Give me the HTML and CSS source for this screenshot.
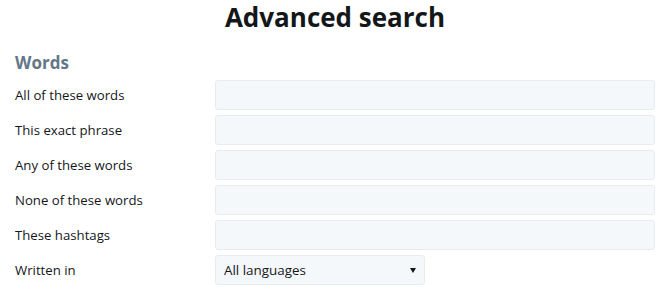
FILE: index.html
```html
<!DOCTYPE html>
<html lang="en">
<head>
  <meta charset="UTF-8">
  <title>Advanced search</title>
  <link rel="stylesheet" href="styles.css">
</head>
<body>
<div class="container">
  <h1 class="title">Advanced search</h1>
  <h2 class="section">Words</h2>
  <ul class="fields">
    <li>
      <label for="allWords">All of these words</label><input type="text" id="allWords">
    </li>
    <li>
      <label for="phrase">This exact phrase</label><input type="text" id="phrase">
    </li>
    <li>
      <label for="anyWords">Any of these words</label><input type="text" id="anyWords">
    </li>
    <li>
      <label for="noneWords">None of these words</label><input type="text" id="noneWords">
    </li>
    <li>
      <label for="hashtags">These hashtags</label><input type="text" id="hashtags">
    </li>
    <li>
      <label for="lang">Written in</label>
      <div class="select">
        <select id="lang">
          <option>All languages</option>
        </select>
      </div>
    </li>
  </ul>
</div>
</body>
</html>
```

FILE: styles.css
```css
* {
  padding: 0;
  margin: 0;
  box-sizing: border-box;
}

body {
  background-color: #fff;
  font-family: "Open Sans", "Noto Sans", sans-serif;
  color: #14171a;
}

.container {
  padding: 0 17px 0 15px;
}

.title {
  font-size: 26px;
  line-height: 34px;
  font-weight: 700;
  text-align: center;
}

.section {
  margin-top: 16px;
  height: 30px;
  font-size: 17px;
  line-height: 26px;
  font-weight: 700;
  color: #657786;
}

.fields {
  list-style: none;
}

.fields li {
  display: flex;
  align-items: center;
  height: 30px;
  margin-bottom: 5px;
}

.fields label {
  width: 200px;
  flex: none;
  font-size: 13.2px;
}

input[type=text] {
  flex: 1;
  height: 30px;
  padding: 0 10px;
  border: 1px solid #e6ecf0;
  border-radius: 3px;
  background-color: #f5f8fa;
  font: inherit;
  font-size: 13px;
}

.select {
  position: relative;
  width: 210px;
  height: 30px;
}

.select select {
  width: 100%;
  height: 30px;
  padding: 0 24px 0 8px;
  border: 1px solid #e6ecf0;
  border-radius: 3px;
  background-color: #f5f8fa;
  font: inherit;
  font-size: 13.4px;
  color: #14171a;
  -webkit-appearance: none;
  appearance: none;
}

.select::after {
  content: "";
  position: absolute;
  right: 9px;
  top: 13px;
  border-left: 3px solid transparent;
  border-right: 3px solid transparent;
  border-top: 5px solid #14171a;
  pointer-events: none;
}
```
